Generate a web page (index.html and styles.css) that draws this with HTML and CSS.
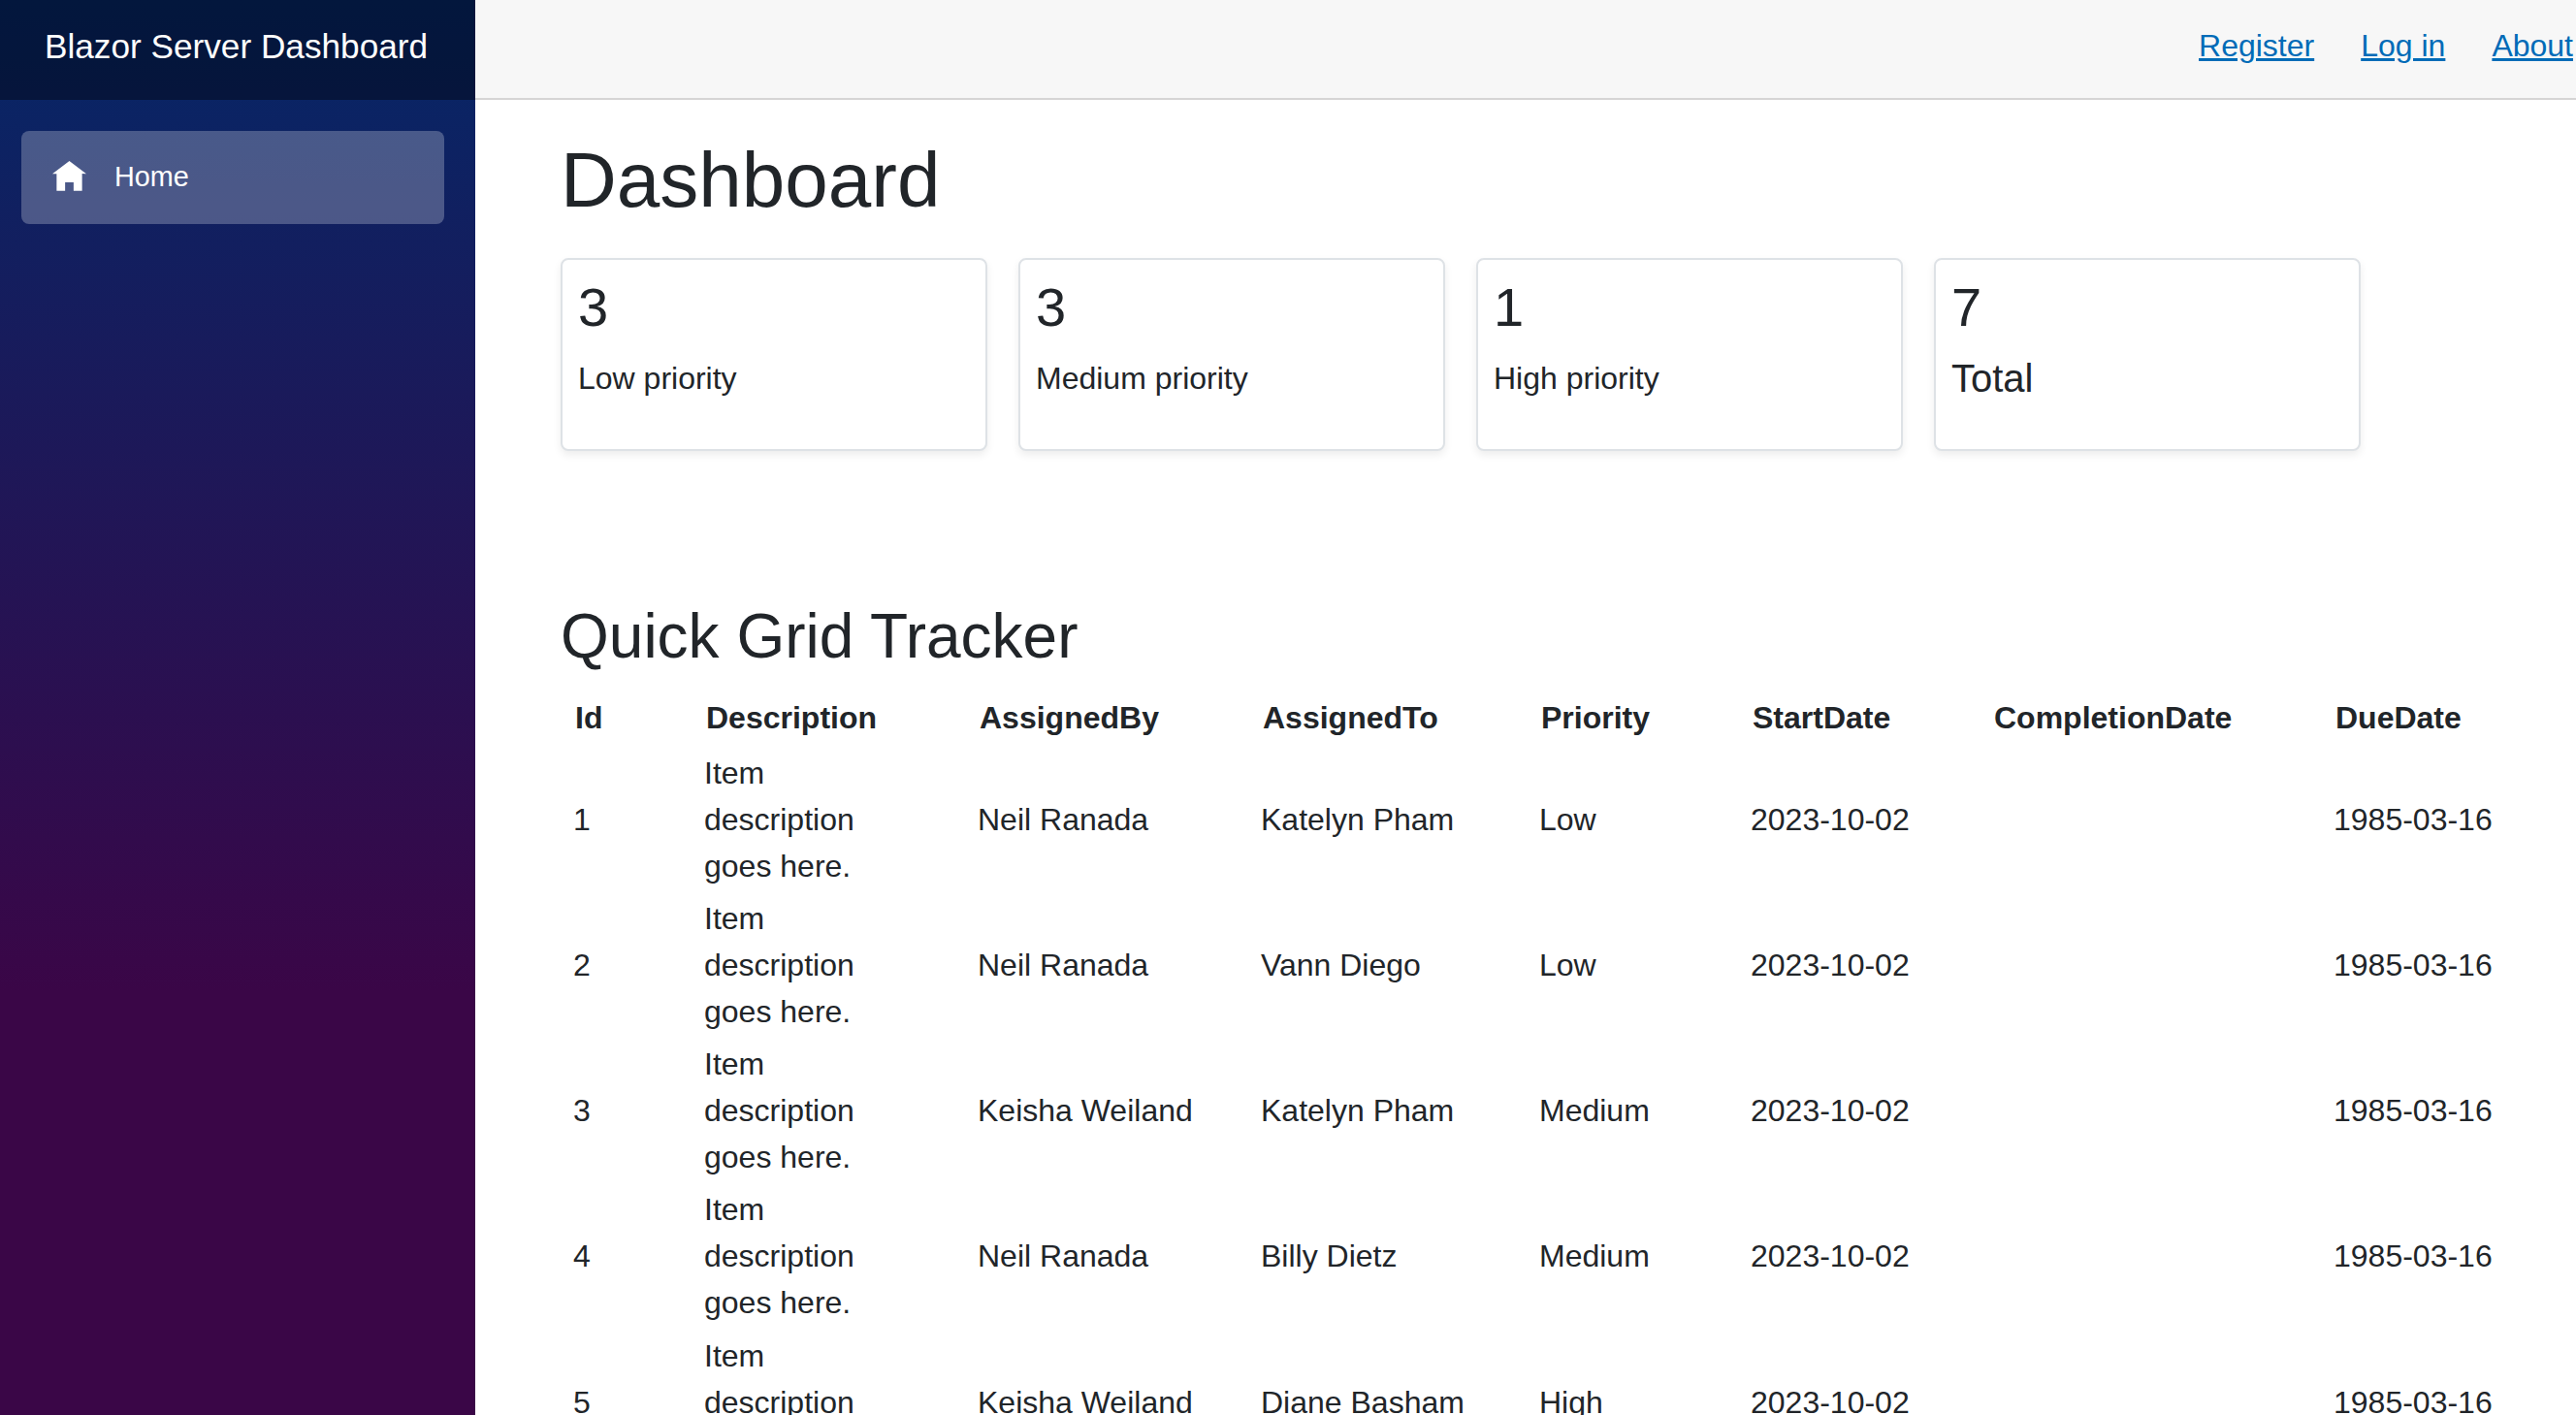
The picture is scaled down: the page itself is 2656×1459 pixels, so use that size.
FILE: index.html
```html
<!DOCTYPE html>
<html lang="en">
<head>
    <meta charset="UTF-8">
    <title>Dashboard</title>
    <link rel="stylesheet" href="styles.css">
</head>
<body>
<div class="page">

    <!-- Sidebar -->
    <div class="sidebar">
        <div class="brand-row">
            <a class="brand" href="#">Blazor Server Dashboard</a>
        </div>
        <nav class="nav-list">
            <a class="nav-link active" href="#">
                <svg class="nav-icon" viewBox="0 0 8 8"><path fill="#fff" d="M4 0l-4 3h1v4h2v-2h2v2h2v-4.03l1 .03-4-3z"/></svg>
                Home
            </a>
        </nav>
    </div>

    <main class="main">
        <div class="top-row">
            <a href="#">Register</a>
            <a href="#">Log in</a>
            <a href="#">About</a>
        </div>

        <div class="content">
            <h1>Dashboard</h1>

            <div class="cards">
                <div class="card">
                    <h3>3</h3>
                    <p>Low priority</p>
                </div>
                <div class="card">
                    <h3>3</h3>
                    <p>Medium priority</p>
                </div>
                <div class="card">
                    <h3>1</h3>
                    <p>High priority</p>
                </div>
                <div class="card">
                    <h3>7</h3>
                    <p class="total">Total</p>
                </div>
            </div>

            <h2>Quick Grid Tracker</h2>

            <table class="grid">
                <colgroup>
                    <col class="col-id">
                    <col class="col-desc">
                    <col class="col-by">
                    <col class="col-to">
                    <col class="col-priority">
                    <col class="col-start">
                    <col class="col-done">
                    <col class="col-due">
                </colgroup>
                <thead>
                    <tr>
                        <th>Id</th>
                        <th>Description</th>
                        <th>AssignedBy</th>
                        <th>AssignedTo</th>
                        <th>Priority</th>
                        <th>StartDate</th>
                        <th>CompletionDate</th>
                        <th>DueDate</th>
                    </tr>
                </thead>
                <tbody>
                    <tr>
                        <td>1</td>
                        <td class="desc">Item description goes here.</td>
                        <td>Neil Ranada</td>
                        <td>Katelyn Pham</td>
                        <td>Low</td>
                        <td>2023-10-02</td>
                        <td></td>
                        <td>1985-03-16</td>
                    </tr>
                    <tr>
                        <td>2</td>
                        <td class="desc">Item description goes here.</td>
                        <td>Neil Ranada</td>
                        <td>Vann Diego</td>
                        <td>Low</td>
                        <td>2023-10-02</td>
                        <td></td>
                        <td>1985-03-16</td>
                    </tr>
                    <tr>
                        <td>3</td>
                        <td class="desc">Item description goes here.</td>
                        <td>Keisha Weiland</td>
                        <td>Katelyn Pham</td>
                        <td>Medium</td>
                        <td>2023-10-02</td>
                        <td></td>
                        <td>1985-03-16</td>
                    </tr>
                    <tr>
                        <td>4</td>
                        <td class="desc">Item description goes here.</td>
                        <td>Neil Ranada</td>
                        <td>Billy Dietz</td>
                        <td>Medium</td>
                        <td>2023-10-02</td>
                        <td></td>
                        <td>1985-03-16</td>
                    </tr>
                    <tr>
                        <td>5</td>
                        <td class="desc">Item description goes here.</td>
                        <td>Keisha Weiland</td>
                        <td>Diane Basham</td>
                        <td>High</td>
                        <td>2023-10-02</td>
                        <td></td>
                        <td>1985-03-16</td>
                    </tr>
                </tbody>
            </table>
        </div>
    </main>
</div>
</body>
</html>
```

FILE: styles.css
```css
html, body {
    margin: 0;
    height: 100%;
    overflow: hidden;
}

body {
    font-family: "Liberation Sans", Arial, sans-serif;
    font-size: 32px;
    line-height: 1.5;
    color: #212529;
    background-color: white;
}

.page {
    display: flex;
    height: 100vh;
}

/* Sidebar */
.sidebar {
    width: 490px;
    flex-shrink: 0;
    background-image: linear-gradient(180deg, rgb(5, 39, 103) 0%, #3a0647 70%);
}

.brand-row {
    display: flex;
    align-items: center;
    box-sizing: border-box;
    height: 103px;
    padding: 0 0 7px 46px;
    background-color: rgba(0, 0, 0, 0.4);
}

.brand {
    color: white;
    font-size: 35.2px;
    text-decoration: none;
}

.nav-list {
    padding: 32px 32px 0 22px;
}

.nav-link {
    display: flex;
    align-items: center;
    height: 96px;
    padding-left: 32px;
    border-radius: 8px;
    color: white;
    font-size: 28.8px;
    text-decoration: none;
}

.nav-link.active {
    background-color: rgba(255, 255, 255, 0.25);
}

.nav-icon {
    width: 35px;
    height: 35px;
    margin-right: 29px;
}

/* Main */
.main {
    flex: 1;
    min-width: 0;
}

.top-row {
    display: flex;
    justify-content: flex-end;
    align-items: center;
    gap: 48px;
    box-sizing: border-box;
    height: 103px;
    padding: 0 3px 7px 0;
    background-color: #f7f7f7;
    border-bottom: 2px solid #d6d5d5;
}

.top-row a {
    color: #006bb7;
}

.content {
    padding: 35px 0 0 88px;
}

h1 {
    margin: 0 0 32px 0;
    font-size: 80px;
    font-weight: 400;
    line-height: 1.2;
}

h2 {
    margin: 153px 0 17px 0;
    font-size: 64px;
    font-weight: 400;
    line-height: 1.2;
}

/* Cards */
.cards {
    display: flex;
    gap: 32px;
}

.card {
    width: 440px;
    height: 199px;
    box-sizing: border-box;
    padding: 15px 16px;
    background-color: white;
    border: 2px solid #dee2e6;
    border-radius: 8px;
    box-shadow: 0 4px 8px rgba(0, 0, 0, 0.075);
}

.card h3 {
    margin: 0 0 16px 0;
    font-size: 56px;
    font-weight: 400;
    line-height: 1.2;
}

.card p {
    margin: 0;
}

.card p.total {
    font-size: 40px;
    line-height: 48px;
}

/* Table */
.grid {
    table-layout: fixed;
    width: 2078px;
    border-collapse: collapse;
}

.col-id { width: 135px; }
.col-desc { width: 282px; }
.col-by { width: 292px; }
.col-to { width: 287px; }
.col-priority { width: 218px; }
.col-start { width: 249px; }
.col-done { width: 352px; }
.col-due { width: 263px; }

.grid th {
    padding: 4px 0 6px 15px;
    text-align: left;
    font-weight: 700;
}

.grid td {
    padding: 3.1px 0 3.1px 13px;
    vertical-align: middle;
}

.grid td.desc {
    padding-right: 60px;
}
```
